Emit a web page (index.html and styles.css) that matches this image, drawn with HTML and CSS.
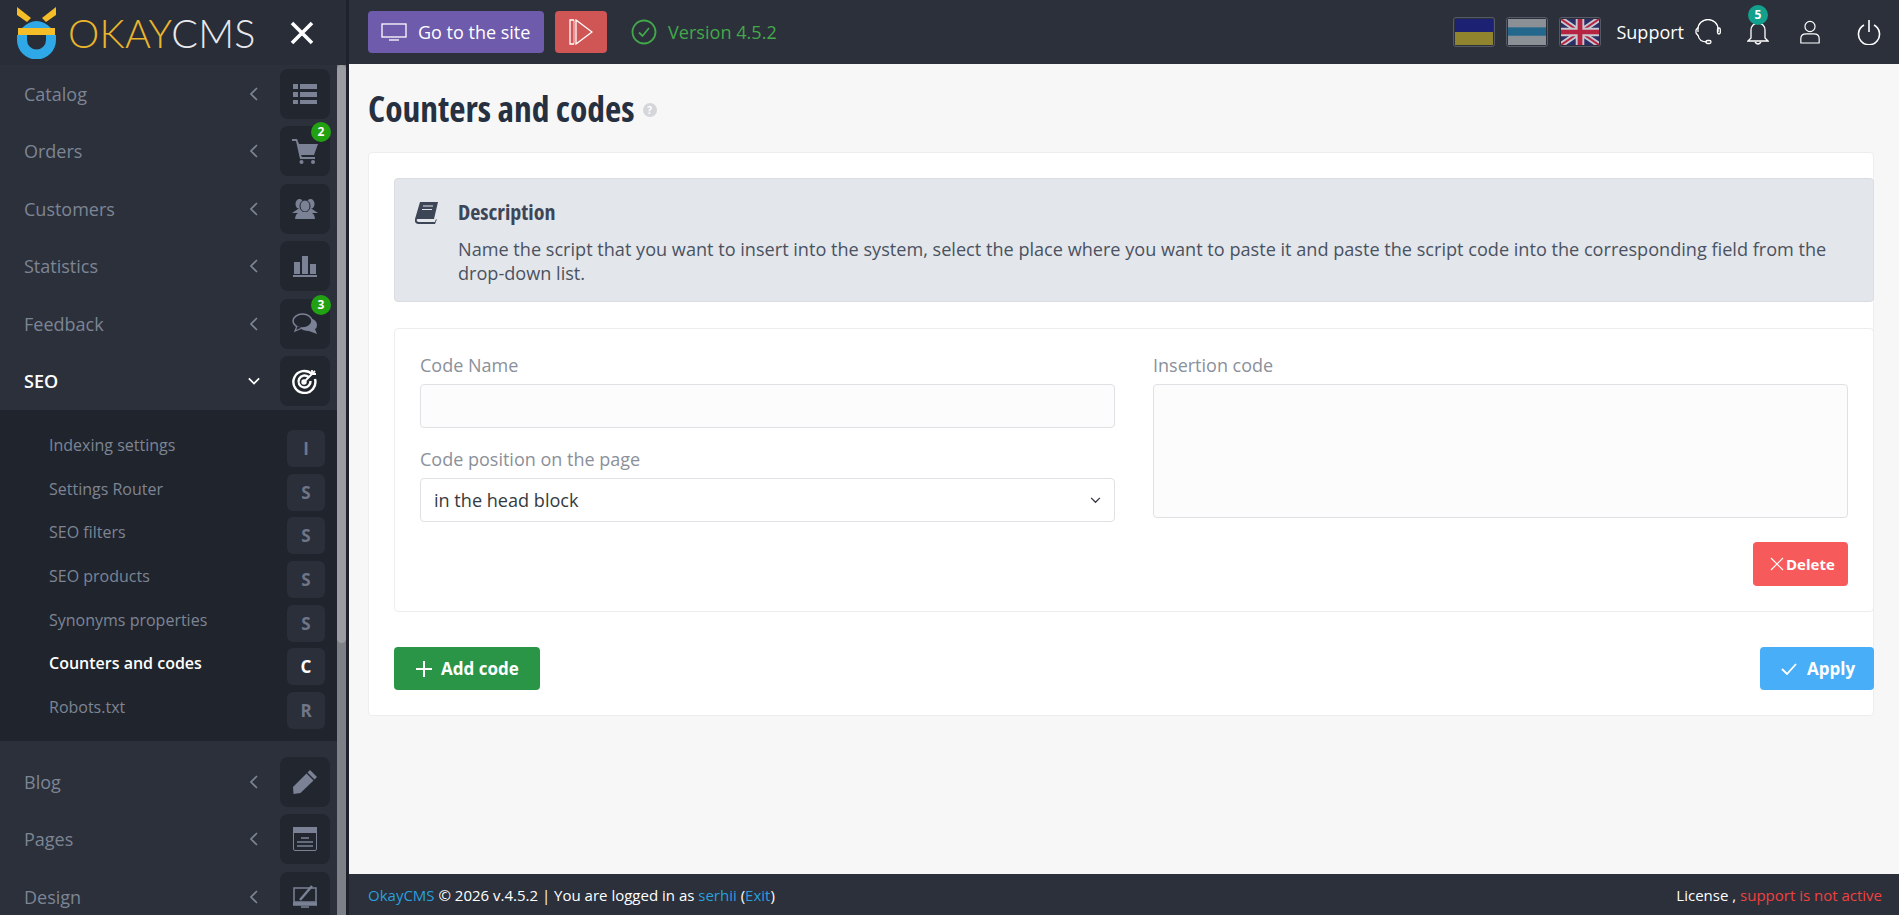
FILE: index.html
```html
<!DOCTYPE html>
<html lang="en">
<head>
<meta charset="utf-8">
<title>Counters and codes</title>
<link rel="stylesheet" href="styles.css">
</head>
<body>
<div class="app">
  <aside class="sidebar">
    <div class="brand">
      <svg class="brand-mark" viewBox="0 0 39 52" width="39" height="52">
        <path d="M0 0 L14 11 L10 15 L0 8Z" fill="#f5bd27"/>
        <path d="M39 0 L25 11 L29 15 L39 8Z" fill="#f5bd27"/>
        <path d="M5 21 Q19.500 7 34 21Z" fill="#2ea8e6"/>
        <rect x="1" y="21" width="37" height="7" fill="#f5bd27"/>
        <path d="M0 28 H10 V33 A9.500 9.500 0 0 0 29 33 V28 H39 V33 A19.500 19.500 0 0 1 0 33Z" fill="#2ea8e6"/>
      </svg>
      <span class="brand-name"><span class="brand-okay">OKAY</span>CMS</span>
      <svg class="brand-close" viewBox="0 0 24 24" width="24" height="24"><path d="M2 2 L22 22 M22 2 L2 22" stroke="#fff" stroke-width="3.600" fill="none"/></svg>
    </div>
    <nav class="menu">
      <div class="menu-row"><span class="menu-label">Catalog</span><svg class="chev" viewBox="0 0 8 14"><path d="M7 1 L1 7 L7 13"/></svg>
        <span class="menu-icon"><svg viewBox="0 0 24 22" width="24" height="22" fill="currentColor"><rect x="0" y="1" width="5" height="5"/><rect x="7" y="1" width="17" height="5"/><rect x="0" y="9" width="5" height="5"/><rect x="7" y="9" width="17" height="5"/><rect x="0" y="17" width="5" height="4"/><rect x="7" y="17" width="17" height="4"/></svg></span></div>
      <div class="menu-row"><span class="menu-label">Orders</span><svg class="chev" viewBox="0 0 8 14"><path d="M7 1 L1 7 L7 13"/></svg>
        <span class="menu-icon"><svg viewBox="0 0 26 26" width="26" height="26" fill="currentColor"><path d="M0 1 H5 L7 6 H26 L22 17 H9 L10 19 H23 V21 H8 L4 3 H0Z"/><circle cx="9.500" cy="24" r="2"/><circle cx="21" cy="24" r="2"/></svg><span class="badge badge-green">2</span></span></div>
      <div class="menu-row"><span class="menu-label">Customers</span><svg class="chev" viewBox="0 0 8 14"><path d="M7 1 L1 7 L7 13"/></svg>
        <span class="menu-icon"><svg viewBox="0 0 26 20" width="26" height="20" fill="currentColor"><ellipse cx="7.500" cy="5" rx="4" ry="5"/><ellipse cx="18.500" cy="5" rx="4" ry="5"/><path d="M0 14 L6 10 H20 L26 14 L20 14 V14 H6Z"/><ellipse cx="13" cy="7" rx="5" ry="6" stroke="#22262f" stroke-width="1"/><path d="M3 20 Q3 14 9 13 H17 Q23 14 23 20Z"/></svg></span></div>
      <div class="menu-row"><span class="menu-label">Statistics</span><svg class="chev" viewBox="0 0 8 14"><path d="M7 1 L1 7 L7 13"/></svg>
        <span class="menu-icon"><svg viewBox="0 0 24 22" width="24" height="22" fill="currentColor"><rect x="1" y="7" width="6" height="12"/><rect x="9" y="1" width="6" height="18"/><rect x="17" y="9" width="6" height="10"/><rect x="0" y="20" width="24" height="2"/></svg></span></div>
      <div class="menu-row"><span class="menu-label">Feedback</span><svg class="chev" viewBox="0 0 8 14"><path d="M7 1 L1 7 L7 13"/></svg>
        <span class="menu-icon"><svg viewBox="0 0 26 22" width="26" height="22"><path d="M18 5 Q25 7 25 12 Q25 15 23 16 L25 21 L17 18 Q11 18 8 15 Z" fill="currentColor"/><ellipse cx="10.500" cy="8" rx="9.500" ry="7" fill="#22262f" stroke="currentColor" stroke-width="1.500"/><path d="M5 13 L3 18 L10 15" fill="#22262f" stroke="currentColor" stroke-width="1.300"/></svg><span class="badge badge-green">3</span></span></div>
      <div class="menu-row menu-row-active"><span class="menu-label">SEO</span><svg class="chev chev-open" viewBox="0 0 14 8"><path d="M1 1 L7 7 L13 1"/></svg>
        <span class="menu-icon"><svg viewBox="0 0 26 26" width="26" height="26" fill="none" stroke="#fff" stroke-width="2.400"><path d="M20 6 A11 11 0 1 0 23 11"/><path d="M16.500 9 A6 6 0 1 0 18.500 13"/><circle cx="12" cy="14" r="1.500" fill="#fff"/><path d="M12 14 L23 3" stroke-width="1.800"/><path d="M20 2 L20 6 L24 6" stroke-width="1.800"/></svg></span></div>
      <div class="submenu">
        <div class="sub-row"><span class="sub-label">Indexing settings</span><span class="sub-key">I</span></div>
        <div class="sub-row"><span class="sub-label">Settings Router</span><span class="sub-key">S</span></div>
        <div class="sub-row"><span class="sub-label">SEO filters</span><span class="sub-key">S</span></div>
        <div class="sub-row"><span class="sub-label">SEO products</span><span class="sub-key">S</span></div>
        <div class="sub-row"><span class="sub-label">Synonyms properties</span><span class="sub-key">S</span></div>
        <div class="sub-row sub-row-active"><span class="sub-label">Counters and codes</span><span class="sub-key">C</span></div>
        <div class="sub-row"><span class="sub-label">Robots.txt</span><span class="sub-key">R</span></div>
      </div>
      <div class="menu-row"><span class="menu-label">Blog</span><svg class="chev" viewBox="0 0 8 14"><path d="M7 1 L1 7 L7 13"/></svg>
        <span class="menu-icon"><svg viewBox="0 0 24 24" width="24" height="24" fill="currentColor"><path d="M17 0 L24 7 L21.500 9.500 L14.500 2.500Z"/><path d="M13.500 3.500 L20.500 10.500 L7.500 23 L0.500 24 L0 17Z"/></svg></span></div>
      <div class="menu-row"><span class="menu-label">Pages</span><svg class="chev" viewBox="0 0 8 14"><path d="M7 1 L1 7 L7 13"/></svg>
        <span class="menu-icon"><svg viewBox="0 0 24 24" width="24" height="24"><rect x="0.500" y="0.500" width="23" height="23" rx="1.500" fill="none" stroke="currentColor"/><rect x="0" y="0" width="24" height="6" fill="currentColor"/><path d="M8 11 H16 M4 15 H20 M4 19 H20" stroke="currentColor" stroke-width="1.500"/></svg></span></div>
      <div class="menu-row"><span class="menu-label">Design</span><svg class="chev" viewBox="0 0 8 14"><path d="M7 1 L1 7 L7 13"/></svg>
        <span class="menu-icon"><svg viewBox="0 0 24 24" width="24" height="24" fill="none" stroke="currentColor"><rect x="1" y="3" width="22" height="14" stroke-width="1.500"/><path d="M0 18 H24 V20 H0Z M8 22 H16" fill="currentColor" stroke-width="1.500"/><path d="M7 15 L19 1" stroke-width="2.500"/></svg></span></div>
    </nav>
    <div class="scroll-thumb"></div>
  </aside>

  <div class="main">
    <header class="topbar">
      <a class="btn-site"><svg viewBox="0 0 26 18" width="26" height="18" fill="none" stroke="#fff" stroke-width="1.300"><rect x="1" y="1" width="24" height="13"/><path d="M8 17 H18"/></svg>Go to the site</a>
      <a class="btn-play"><svg viewBox="0 0 24 26" width="24" height="26" fill="none" stroke="#fff" stroke-width="1.300"><path d="M5 1 H1 V25 H5"/><path d="M7 1 L23 13 L7 25Z"/><path d="M5 1 V25" stroke-width="0.800"/></svg></a>
      <span class="version"><svg viewBox="0 0 26 26" width="26" height="26" fill="none" stroke="#43a84a" stroke-width="1.800"><circle cx="13" cy="13" r="11.500"/><path d="M8 13.500 L11.500 17 L18 9"/></svg>Version 4.5.2</span>
      <div class="top-right">
        <span class="flag"><svg viewBox="0 0 40 28" preserveAspectRatio="none"><rect width="40" height="14" fill="#1b1f7e"/><rect y="14" width="40" height="14" fill="#a3932d"/></svg></span>
        <span class="flag"><svg viewBox="0 0 40 28" preserveAspectRatio="none"><rect width="40" height="28" fill="#9da2a8"/><rect y="9" width="40" height="9" fill="#23729c"/></svg></span>
        <span class="flag"><svg viewBox="0 0 40 28" preserveAspectRatio="none"><rect width="40" height="28" fill="#2c2f6f"/><path d="M0 0 L40 28 M40 0 L0 28" stroke="#e3e3ea" stroke-width="6"/><path d="M0 0 L40 28 M40 0 L0 28" stroke="#cf2343" stroke-width="2"/><path d="M20 0 V28 M0 14 H40" stroke="#e3e3ea" stroke-width="9"/><path d="M20 0 V28 M0 14 H40" stroke="#cf2343" stroke-width="5"/></svg></span>
        <span class="support">Support</span>
        <svg class="ic-head" viewBox="0 0 26 26" width="26" height="26" fill="none" stroke="#fff" stroke-width="1.300"><path d="M3 13 V10 A10 9.500 0 0 1 23 10 V13"/><path d="M3 8.500 L1 11 V14 L3 16.500"/><rect x="22.500" y="9" width="2.800" height="6" rx="1.400"/><path d="M3 16 Q4 23 12 23"/><rect x="11" y="21.500" width="5" height="3" rx="1.500"/></svg>
        <span class="bell"><svg viewBox="0 0 22 26" width="22" height="26" fill="none" stroke="#fff" stroke-width="1.300"><path d="M4 19 V11 A7 7 0 0 1 18 11 V19 L21 22 H1Z"/><path d="M8 23 Q11 27 14 23"/></svg><span class="badge badge-teal">5</span></span>
        <svg class="ic-user" viewBox="0 0 24 26" width="22" height="26" fill="none" stroke="#fff" stroke-width="1.300"><circle cx="12" cy="7" r="5.500"/><path d="M2 25 V20 Q2 15 8 15 H16 Q22 15 22 20 V25Z" stroke-linejoin="round"/></svg>
        <svg class="ic-power" viewBox="0 0 24 26" width="24" height="26" fill="none" stroke="#fff" stroke-width="1.600"><path d="M12 1 V13"/><path d="M7 6 A10.500 10.500 0 1 0 17 6"/></svg>
      </div>
    </header>

    <main class="content">
      <h1 class="page-title">Counters and codes <span class="help">?</span></h1>
      <section class="card">
        <div class="desc">
          <svg class="desc-icon" viewBox="0 0 24 22" width="24" height="22"><path d="M5 0 H23 L19 17 H3 Q1 17 2 19 Q2.500 20 4 20 H20 L20.500 18 L22 17 L20 22 H3 Q-1 21 0 17Z" fill="#3d4657"/><path d="M8 4 H18 M7 7.500 H17" stroke="#e3e6eb" stroke-width="1.200"/></svg>
          <div class="desc-body">
            <div class="desc-title">Description</div>
            <p class="desc-text">Name the script that you want to insert into the system, select the place where you want to paste it and paste the script code into the corresponding field from the drop-down list.</p>
          </div>
        </div>
        <div class="panel">
          <div class="panel-grid">
            <div class="col">
              <label class="field-label">Code Name</label>
              <div class="input"></div>
              <label class="field-label field-label-second">Code position on the page</label>
              <div class="input select">in the head block<svg viewBox="0 0 12 8" width="11" height="7" fill="none" stroke="#343a40" stroke-width="1.500"><path d="M1 1 L6 6 L11 1"/></svg></div>
            </div>
            <div class="col">
              <label class="field-label">Insertion code</label>
              <div class="input textarea"></div>
              <div class="delete-row"><a class="btn btn-delete"><svg viewBox="0 0 14 14" width="14" height="14" fill="none" stroke="#fff" stroke-width="1.200"><path d="M1 1 L13 13 M13 1 L1 13"/></svg>Delete</a></div>
            </div>
          </div>
        </div>
        <div class="actions">
          <a class="btn btn-add"><svg viewBox="0 0 16 16" width="16" height="16" fill="none" stroke="#fff" stroke-width="2"><path d="M8 0 V16 M0 8 H16"/></svg>Add code</a>
          <a class="btn btn-apply"><svg viewBox="0 0 16 12" width="16" height="12" fill="none" stroke="#fff" stroke-width="1.800"><path d="M1 6 L6 11 L15 1"/></svg>Apply</a>
        </div>
      </section>
    </main>

    <footer class="footer">
      <span><a class="link">OkayCMS</a> © 2026 v.4.5.2 | You are logged in as <a class="link">serhii</a> (<a class="link">Exit</a>)</span>
      <span>License , <span class="alert">support is not active</span></span>
    </footer>
  </div>
</div>
</body>
</html>
```
FILE: styles.css
```css
* { box-sizing: border-box; }
html, body { margin: 0; height: 100%; }
body { font-family: "Open Sans", "Liberation Sans", sans-serif; color: #2b303b; overflow: hidden; }
.app { display: grid; grid-template-columns: 349px 1fr; height: 915px; overflow: hidden; }

.sidebar { position: relative; background: #2b303b; border-right: 3px solid #1f222a; overflow: hidden; }
.brand { height: 65px; background: #292d38; display: flex; align-items: center; padding-left: 17px; }
.brand-mark { flex: none; }
.brand-name { margin-left: 12px; font-family: Lato, sans-serif; font-weight: 300; font-size: 39.500px; letter-spacing: 0.300px; color: #e8e9ec; line-height: 1; }
.brand-okay { color: #e9b52d; }
.brand-close { margin-left: 34px; }

.menu { width: 337px; }
.menu-row { height: 57.500px; display: flex; align-items: center; padding: 0 7px 0 24px; color: #7d8594; }
.menu-label { flex: 1; font-size: 18px; }
.menu-row-active { color: #fff; }
.menu-row-active .menu-label { font-weight: 600; }
.chev { width: 8px; height: 14px; fill: none; stroke: #7d8594; stroke-width: 1.600; margin-right: 22px; }
.chev-open { width: 12px; height: 8px; stroke: #fff; stroke-width: 2; margin-right: 20px; }
.menu-icon { position: relative; width: 50px; height: 50px; border-radius: 8px; background: #22262f; color: #7b8296; display: flex; align-items: center; justify-content: center; }
.badge { position: absolute; width: 20px; height: 20px; border-radius: 50%; color: #fff; font-size: 12px; font-weight: 700; display: flex; align-items: center; justify-content: center; line-height: 1; }
.menu-icon .badge { top: -4px; right: -1px; }
.badge-green { background: #22a112; }
.badge-teal { background: #13a08c; top: -14px; left: 1px; }

.submenu { background: #20242d; padding: 20px 7px 5px 0; margin-bottom: 12px; height: 331px; }
.sub-row { height: 43.700px; display: flex; align-items: flex-start; justify-content: space-between; padding: 0 5px 0 49px; }
.sub-label { font-size: 16px; color: #7d8594; line-height: 30px; }
.sub-key { width: 38px; height: 37px; border-radius: 6px; background: #2b2f3a; color: #6f7688; font-weight: 700; font-size: 17px; display: flex; align-items: center; justify-content: center; }
.sub-row-active .sub-label { color: #fff; font-weight: 600; }
.sub-row-active .sub-key { color: #fff; }

.scroll-thumb { position: absolute; left: 337px; top: 65px; width: 9px; height: 578px; border-radius: 5px; background: #9a9ca1; z-index: 1; }
.sidebar::after { content: ""; position: absolute; left: 337px; top: 65px; bottom: 0; width: 9px; background: #7d8087; }

.main { display: flex; flex-direction: column; min-width: 0; }
.topbar { height: 64px; background: #2b303b; display: flex; align-items: center; padding: 0 18px 0 19px; flex: none; }
.btn-site { width: 176px; height: 42px; background: #6e5bab; border-radius: 4px; color: #fff; font-size: 18px; font-weight: 500; display: flex; align-items: center; gap: 11px; padding-left: 13px; white-space: nowrap; }
.btn-play { width: 52px; height: 42px; margin-left: 11px; background: #d05555; border-radius: 4px; display: flex; align-items: center; justify-content: center; }
.version { display: flex; align-items: center; gap: 11px; margin-left: 24px; color: #43a84a; font-size: 18.100px; }
.top-right { margin-left: auto; display: flex; align-items: center; }
.flag { width: 42px; height: 30px; border: 1px solid #555a66; border-radius: 3px; margin-right: 11px; padding: 1px; display: block; overflow: hidden; }
.flag svg { display: block; width: 100%; height: 100%; opacity: 0.85; }
.support { color: #fff; font-size: 18px; font-weight: 500; margin-left: 4px; }
.ic-head { margin-left: 11px; }
.bell { position: relative; margin-left: 26px; display: block; height: 26px; }
.ic-user { margin-left: 30px; }
.ic-power { margin-left: 36px; }

.content { flex: 1; background: #f7f7f7; padding: 0 25px 0 19px; min-height: 0; }
.page-title { margin: 0; height: 88px; font-size: 35.500px; font-weight: 700; font-stretch: 75%; color: #263040; display: flex; align-items: center; gap: 8px; }
.help { width: 14px; height: 14px; border-radius: 50%; background: #d4d6d9; color: #fff; font-size: 10px; font-weight: 700; display: inline-flex; align-items: center; justify-content: center; font-stretch: 100%; margin-top: 4px; }
.card { background: #fff; border: 1px solid #eceded; border-radius: 4px; height: 564px; padding: 25px 0 0 25px; width: 1506px; }
.desc { width: 1480px; height: 124px; background: #e3e6eb; border: 1px solid #d9dce1; border-radius: 4px; display: flex; padding: 17px 20px 0 20px; }
.desc-icon { flex: none; margin-top: 6px; }
.desc-body { margin-left: 19px; }
.desc-title { font-size: 22px; font-weight: 700; font-stretch: 75%; color: #3d4657; line-height: 30px; }
.desc-text { margin: 11px 0 0; font-size: 18.130px; line-height: 24px; color: #4a5261; }
.panel { width: 1480px; height: 284px; margin-top: 26px; border: 1px solid #eceded; border-radius: 4px; padding: 22px 26px 0 25px; }
.panel-grid { display: grid; grid-template-columns: 695px 695px; column-gap: 38px; }
.col { display: flex; flex-direction: column; }
.field-label { font-size: 18px; color: #8b909a; line-height: 25px; height: 33px; padding-top: 2px; display: block; }
.field-label-second { margin-top: 17px; }
.input { height: 44px; border: 1px solid #dfe1e5; border-radius: 4px; background: #fcfcfc; }
.select { display: flex; align-items: center; justify-content: space-between; padding: 0 13px; font-size: 18.100px; color: #343a40; background: #fff; }
.textarea { height: 134px; }
.delete-row { display: flex; justify-content: flex-end; margin-top: 24px; }
.btn { display: inline-flex; align-items: center; color: #fff; font-weight: 700; border-radius: 4px; white-space: nowrap; }
.btn-delete { width: 95px; height: 44px; background: #f75a5a; font-size: 15px; padding-left: 17px; gap: 2px; }
.actions { width: 1480px; display: flex; justify-content: space-between; margin-top: 35px; }
.btn-add { width: 146px; height: 43px; background: #2a9547; font-size: 17px; padding-left: 22px; gap: 9px; }
.btn-apply { width: 114px; height: 43px; background: #48aef8; font-size: 17px; padding-left: 21px; gap: 10px; }

.footer { height: 41px; flex: none; background: #2b303b; color: #fff; font-size: 15px; font-weight: 500; display: flex; align-items: center; justify-content: space-between; padding: 0 17px 0 19px; }
.link { color: #2a9fdc; }
.alert { color: #f0413f; font-weight: 400; }
```
